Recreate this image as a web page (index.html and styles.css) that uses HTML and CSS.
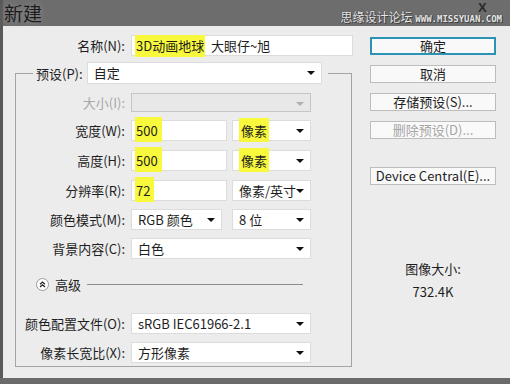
FILE: index.html
```html
<!DOCTYPE html>
<html>
<head>
<meta charset="utf-8">
<title>新建</title>
<link rel="stylesheet" href="styles.css">
</head>
<body>
<div class="window">
	<div class="titlebar">
		<span class="title">新建</span>
		<span class="mark">思缘设计论坛 <span class="mark_url">WWW.MISSYUAN.COM</span></span>
		<span class="close">X</span>
	</div>
	<div class="client">
		<div class="main">
			<div class="row row_name">
				<label class="lbl lbl_name">名称(N):</label>
				<div class="field input name_input"><span class="hl">3D动画地球</span>&nbsp;&nbsp;大眼仔~旭</div>
			</div>
			<fieldset class="group">
				<legend class="preset">
					<label class="lbl_preset">预设(P):</label>
					<div class="field select preset_select">自定</div>
				</legend>
				<div class="row r_size">
					<label class="lbl disabled">大小(I):</label>
					<div class="field select off w_full"></div>
				</div>
				<div class="row r_w">
					<label class="lbl">宽度(W):</label>
					<div class="field input w_num"><span class="hl hl_num">500</span></div>
					<div class="field select w_unit"><span class="hl hl_unit">像素</span></div>
				</div>
				<div class="row r_h">
					<label class="lbl">高度(H):</label>
					<div class="field input w_num"><span class="hl hl_num">500</span></div>
					<div class="field select w_unit"><span class="hl hl_unit">像素</span></div>
				</div>
				<div class="row r_res">
					<label class="lbl">分辨率(R):</label>
					<div class="field input w_num"><span class="hl hl_num">72</span></div>
					<div class="field select w_unit">像素/英寸</div>
				</div>
				<div class="row r_mode">
					<label class="lbl">颜色模式(M):</label>
					<div class="field select w_mode">RGB 颜色</div>
					<div class="field select w_unit">8 位</div>
				</div>
				<div class="row r_bg">
					<label class="lbl">背景内容(C):</label>
					<div class="field select w_full">白色</div>
				</div>
				<div class="adv">
					<span class="adv_btn"><svg width="13" height="13" viewBox="0 0 13 13"><circle cx="6.5" cy="6.5" r="6" fill="#fff" stroke="#9a9a9a"/><path d="M4 6.2 L6.5 4 L9 6.2 M4 9 L6.5 6.8 L9 9" fill="none" stroke="#222" stroke-width="1.2"/></svg></span>
					<span class="adv_text">高级</span>
					<span class="adv_line"></span>
				</div>
				<div class="row r_prof">
					<label class="lbl">颜色配置文件(O):</label>
					<div class="field select w_full">sRGB IEC61966-2.1</div>
				</div>
				<div class="row r_pix">
					<label class="lbl">像素长宽比(X):</label>
					<div class="field select w_full">方形像素</div>
				</div>
			</fieldset>
		</div>
		<div class="side">
			<div class="btn btn_ok">确定</div>
			<div class="btn">取消</div>
			<div class="btn">存储预设(S)...</div>
			<div class="btn disabled">删除预设(D)...</div>
			<div class="btn btn_dc">Device Central(E)...</div>
			<div class="info">
				<div class="info_title">图像大小:</div>
				<div class="info_val">732.4K</div>
			</div>
		</div>
	</div>
</div>
</body>
</html>
```
FILE: styles.css
```css
html,body{
margin:0;
padding:0;
}
body{
width:510px;
height:384px;
overflow:hidden;
background:#6a6a6a;
font-family:"Noto Sans CJK SC","Liberation Sans",sans-serif;
font-size:13px;
color:#1e1e1e;
}
.window{
border-left:3px solid #595959;
}
.titlebar{
height:26px;
display:flex;
align-items:center;
background:#6d6d6d;
}
.title{
font-size:19px;
line-height:24px;
color:#1c1c1c;
margin-left:1px;
text-shadow:0 0 6px #9a9a9a;
}
.mark{
margin-left:auto;
margin-right:8px;
margin-top:9px;
font-size:12px;
line-height:14px;
color:#e6e6e6;
text-shadow:0 0 1px #333,1px 1px 0 #444;
white-space:nowrap;
}
.mark_url{
font-family:"DejaVu Sans Mono",monospace;
font-size:9px;
font-weight:bold;
}
.close{
position:absolute;
left:478px;
top:1px;
font-family:"Liberation Sans",sans-serif;
font-weight:bold;
font-size:13px;
line-height:14px;
color:#2a2a2a;
}
.client{
height:352px;
background:#ececec;
display:flex;
}
.main{
width:352px;
}
.row{
display:flex;
align-items:center;
height:21px;
}
.lbl{
width:109px;
margin-right:6px;
text-align:right;
white-space:nowrap;
}
.lbl.disabled{
color:#a8a8a8;
}
.row_name{
margin-top:9px;
}
.lbl_name{
width:122px;
}
.field{
box-sizing:border-box;
height:21px;
line-height:19px;
border:1px solid #dcdcdc;
background:#fff;
padding-left:3px;
white-space:nowrap;
position:relative;
}
.name_input{
width:222px;
}
.select{
padding-left:6px;
}
.select::after{
content:"";
position:absolute;
right:6px;
top:8px;
border-left:4px solid transparent;
border-right:4px solid transparent;
border-top:4px solid #111;
}
.select.off{
background:#e8e8e8;
border-color:#c6c6c6;
}
.select.off::after{
border-top-color:#b0b0b0;
}
.hl{
background:#f8f83c;
padding:1px 1px 2px;
}
.hl_num{
padding:4px 4px 2px 1px;
}
.hl_unit{
padding:3px 2px 2px;
}
.group{
margin:6px 0 0 12px;
padding:0 0 3px 0;
width:337px;
box-sizing:border-box;
border:1px solid #a4a4a4;
min-width:0;
}
.preset{
display:flex;
align-items:center;
margin-left:17px;
padding:0 6px 0 3px;
}
.lbl_preset{
margin-right:4px;
}
.preset_select{
width:235px;
height:22px;
}
.r_size{
margin-top:8px;
}
.r_w{
margin-top:7px;
}
.r_h,.r_res{
margin-top:9px;
}
.r_mode,.r_bg{
margin-top:8px;
}
.w_full{
width:180px;
}
.w_num{
width:96px;
}
.w_unit{
width:79px;
margin-left:5px;
}
.w_mode{
width:91px;
margin-right:10px;
}
.w_mode + .w_unit{
margin-left:0;
}
.r_size .w_full{
height:19px;
}
.adv{
display:flex;
align-items:center;
height:20px;
margin-top:15px;
padding-left:20px;
}
.adv_btn{
display:flex;
width:13px;
height:13px;
}
.adv_text{
margin-left:6px;
}
.adv_line{
width:216px;
margin-left:6px;
border-top:1px solid #8c8c8c;
}
.r_prof{
margin-top:19px;
}
.r_pix{
margin-top:8px;
}
.side{
width:126px;
margin-left:15px;
padding-top:11px;
display:flex;
flex-direction:column;
}
.btn{
box-sizing:border-box;
height:18px;
line-height:16px;
margin-bottom:10px;
text-align:center;
background:#f9f9f9;
border:1px solid #bdbdbd;
white-space:nowrap;
}
.btn.disabled{
color:#a6a6a6;
}
.btn_ok{
border:2px solid #2b93b6;
line-height:14px;
}
.btn_dc{
margin-top:18px;
}
.info{
margin-top:64px;
text-align:center;
}
.info_title{
line-height:20px;
}
.info_val{
margin-top:3px;
line-height:20px;
}
```
